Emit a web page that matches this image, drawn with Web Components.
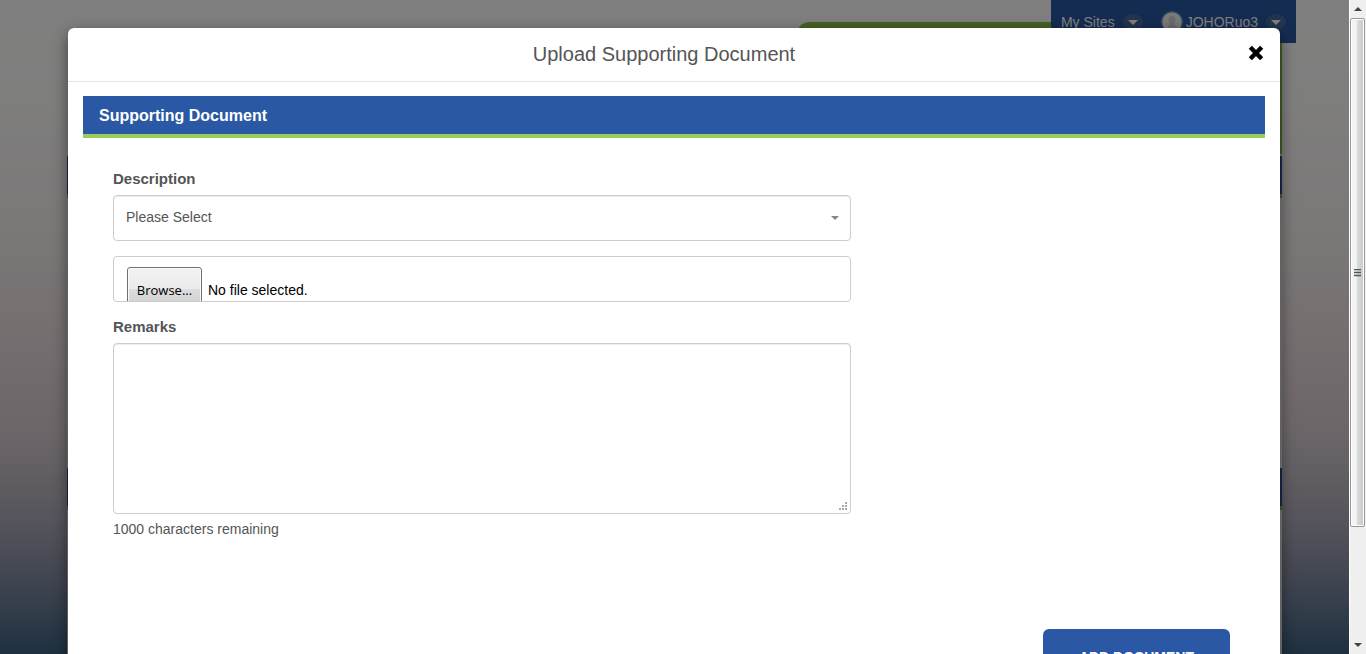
<!DOCTYPE html>
<html lang="en">
<head>
<meta charset="utf-8">
<meta name="viewport" content="width=device-width, initial-scale=1">
<title>Upload Supporting Document</title>
<style>
  html, body { margin: 0; height: 100%; }
  body { font: 14px/20px "Liberation Sans", Arial, sans-serif; color: #555; overflow: hidden; }
</style>
</head>
<body>
<app-shell>
  <site-page slot="page"></site-page>
  <modal-dialog slot="dialog" heading="Upload Supporting Document">
    <section-panel heading="Supporting Document">
      <upload-form></upload-form>
    </section-panel>
  </modal-dialog>
  <scroll-rail slot="rail"></scroll-rail>
</app-shell>

<script>
function define(name, html, setup) {
  const template = document.createElement('template');
  template.innerHTML = html;
  customElements.define(name, class extends HTMLElement {
    constructor() {
      super();
      this.attachShadow({ mode: 'open' }).append(template.content.cloneNode(true));
    }
    connectedCallback() {
      const heading = this.shadowRoot.querySelector('[data-heading]');
      if (heading) heading.textContent = this.getAttribute('heading');
      if (setup) setup(this.shadowRoot);
    }
  });
}

define('app-shell', `
  <style>
    :host { display: grid; grid-template-columns: minmax(0, 1fr) 17px; height: 100vh; overflow: hidden; }
    .stage {
      position: relative; overflow: hidden;
      background: linear-gradient(#fff 0%, #fdfdfb 15%, #f5eeee 38%, #ecdfe1 50%, #d8ccd2 66%, #bcb6c0 75%, #aaa8b8 80%, #8a90a4 87%, #687c96 93%, #3c6080 100%);
    }
    .backdrop { position: absolute; inset: 0; padding: 28px 69px 0 68px; background: rgba(0, 0, 0, .5); }
  </style>
  <div class="stage">
    <slot name="page"></slot>
    <div class="backdrop"><slot name="dialog"></slot></div>
  </div>
  <slot name="rail"></slot>`);

define('site-page', `
  <style>
    :host { display: block; position: relative; padding: 0 67px; }
    site-nav { position: absolute; top: 0; right: 53px; }
    .banner { display: flex; justify-content: flex-end; padding-top: 22px; height: 132px; }
    .tab { width: 40%; background: #8cc34b; border-top-left-radius: 14px; }
    .bar { height: 38px; background: #2a58a5; border-bottom: 4px solid #8cc34b; }
    .gap { height: 2px; background: #fff; }
    .block { height: 270px; background: #fff; }
  </style>
  <div class="banner"><div class="tab"></div></div>
  <div class="gap"></div>
  <div class="bar"></div><div class="block"></div>
  <div class="bar"></div><div class="block"></div>
  <site-nav></site-nav>`);

define('site-nav', `
  <style>
    :host { display: block; background: #2a58a5; color: #fff; }
    nav { display: flex; gap: 17px; height: 43px; padding: 0 10px; }
    a { display: flex; align-items: center; color: inherit; text-decoration: none; }
    .avatar { margin-right: 2px; }
    .drop { margin-left: 8px; }
  </style>
  <nav aria-label="Account">
    <a href="#">My Sites
      <svg class="drop" width="20" height="16" viewBox="0 0 20 16" aria-hidden="true"><ellipse cx="10" cy="8" rx="10" ry="8" fill="#47699c"/><path d="M5 6h10l-5 5z" fill="#fff"/></svg>
    </a>
    <a href="#">
      <svg class="avatar" width="24" height="24" viewBox="0 0 24 24" aria-hidden="true"><circle cx="12" cy="12" r="10.5" fill="#f4f4f4" stroke="#4d86bd" stroke-width="1.5"/><path d="M8 20v-4l2-2c-3-4-1-8 2-8s5 4 2 8l3 2v4z" fill="#d6d6d6"/></svg>
      JOHORuo3
      <svg class="drop" width="20" height="16" viewBox="0 0 20 16" aria-hidden="true"><ellipse cx="10" cy="8" rx="10" ry="8" fill="#47699c"/><path d="M5 6h10l-5 5z" fill="#fff"/></svg>
    </a>
  </nav>`);

define('modal-dialog', `
  <style>
    :host { display: block; background: #fff; border-radius: 6px; box-shadow: 0 5px 15px rgba(0, 0, 0, .5); }
    header { display: flex; align-items: center; height: 51px; padding: 0 14px 2px; border-bottom: 1px solid #e5e5e5; }
    h1 { flex: 1; margin: 0; font-size: 20px; font-weight: 400; line-height: 28px; text-align: center; }
    button { display: flex; padding: 0; border: 0; background: none; cursor: pointer; }
    .body { padding: 14px 15px; }
  </style>
  <div role="dialog" aria-labelledby="title">
    <header>
      <h1 id="title" data-heading></h1>
      <button type="button" aria-label="Close">
        <svg width="20" height="20" viewBox="0 0 20 20" aria-hidden="true"><path d="M4.300 3.300L15.700 14.700M15.700 3.300L4.300 14.700" stroke="#000" stroke-width="4.400"/></svg>
      </button>
    </header>
    <div class="body"><slot></slot></div>
  </div>`);

define('section-panel', `
  <style>
    :host { display: block; }
    h2 { margin: 0; padding: 0 16px; height: 38px; font-size: 16px; line-height: 40px; color: #fff; background: #2a58a5; border-bottom: 4px solid #9acd5c; }
    .content { padding: 31px 30px; }
  </style>
  <h2 data-heading></h2>
  <div class="content"><slot></slot></div>`);

define('upload-form', `
  <style>
    :host { display: block; --gutter: 30px; }
    form { display: flex; flex-direction: column; }
    /* eight of twelve columns, less the gutter */
    .fields { display: flex; flex-direction: column; width: calc((100% + var(--gutter)) * 8 / 12 - var(--gutter)); min-width: 320px; }
    .label { font-size: 15px; font-weight: 700; line-height: 20px; margin-bottom: 6px; }
    .control { box-sizing: border-box; width: 100%; border: 1px solid #ccc; border-radius: 4px; background: #fff; font: inherit; color: inherit; box-shadow: inset 0 1px 1px rgba(0, 0, 0, .075); }
    .pick { position: relative; display: flex; margin-bottom: 15px; }
    select { appearance: none; height: 46px; padding: 0 12px 2px; }
    .caret { position: absolute; right: 12px; top: 21px; }
    .file { position: relative; display: flex; height: 46px; padding: 10px 13px 0; overflow: hidden; color: #000; margin-bottom: 15px; box-shadow: none; }
    .file input { position: absolute; inset: 0; opacity: 0; }
    .browse { box-sizing: border-box; width: 75px; height: 44px; border: 1px solid #707070; border-radius: 3px; box-shadow: inset 0 0 0 1px #fafafa; background: linear-gradient(#f2f2f2, #ebebeb 50%, #dcdcdc 50%, #cfcfcf); text-align: center; font-family: "Open Sans", sans-serif; font-size: 13px; line-height: 44px; }
    .name { margin-left: 6px; line-height: 46px; }
    textarea { display: block; height: 171px; padding: 10px 12px; resize: both; box-shadow: none; }
    textarea::-webkit-resizer {
      --dot: linear-gradient(#aaa, #aaa);
      background:
        var(--dot) 10px 4px / 2px 2px no-repeat,
        var(--dot) 7px 7px / 2px 2px no-repeat,
        var(--dot) 10px 7px / 2px 2px no-repeat,
        var(--dot) 4px 10px / 2px 2px no-repeat,
        var(--dot) 7px 10px / 2px 2px no-repeat,
        var(--dot) 10px 10px / 2px 2px no-repeat;
    }
    .count { margin: 5px 0 90px; }
    button { align-self: flex-end; margin-right: 5px; height: 56px; padding: 0 36px; border: 0; border-radius: 6px; background: #2a58a5; color: #fff; font: 700 14px/20px "Liberation Sans", Arial, sans-serif; }
  </style>
  <form>
    <div class="fields">
      <label class="label" for="description">Description</label>
      <div class="pick">
        <select class="control" id="description"><option>Please Select</option></select>
        <svg class="caret" width="8" height="4" viewBox="0 0 8 4" aria-hidden="true"><path d="M0 0h8L4 4z" fill="#888"/></svg>
      </div>
      <label class="control file">
        <input type="file" aria-label="Supporting document file">
        <span class="browse">Browse...</span><span class="name">No file selected.</span>
      </label>
      <label class="label" for="remarks">Remarks</label>
      <textarea class="control" id="remarks" maxlength="1000"></textarea>
    </div>
    <div class="count">1000 characters remaining</div>
    <button type="button">ADD DOCUMENT</button>
  </form>`, root => {
    const remarks = root.querySelector('textarea');
    remarks.addEventListener('input', () => {
      root.querySelector('.count').textContent = (1000 - remarks.value.length) + ' characters remaining';
    });
  });

define('scroll-rail', `
  <style>
    :host { display: flex; flex-direction: column; background: #f0f0f0; border-left: 1px solid #fff; }
    .end { display: grid; place-items: center; height: 18px; }
    .thumb { flex: 509; box-sizing: border-box; display: grid; place-items: center; width: 15px; border: 1px solid #979797; border-radius: 2px; box-shadow: inset 0 0 0 1px #fff; background: linear-gradient(90deg, #f4f4f4 0 40%, #dcdcdf 50%, #c6c6ca); }
    .rest { flex: 109; }
    svg { display: block; }
  </style>
  <div class="end"><svg width="8" height="4" viewBox="0 0 8 4" aria-hidden="true"><path d="M0 4h8L4 0z" fill="#444"/></svg></div>
  <div class="thumb"><svg width="8" height="8" viewBox="0 0 8 8" aria-hidden="true"><path d="M0 .5h7M0 3.500h7M0 6.500h7" stroke="#555" stroke-width="1.500"/></svg></div>
  <div class="rest"></div>
  <div class="end"><svg width="8" height="4" viewBox="0 0 8 4" aria-hidden="true"><path d="M0 0h8L4 4z" fill="#444"/></svg></div>`);
</script>
</body>
</html>
